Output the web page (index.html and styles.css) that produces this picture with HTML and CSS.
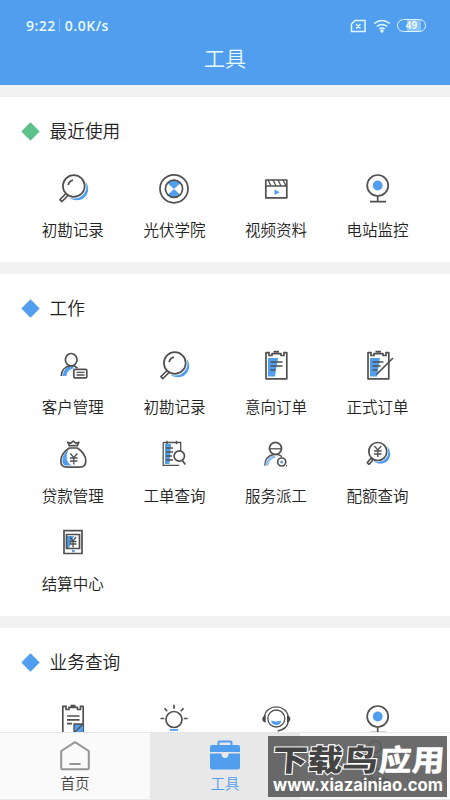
FILE: index.html
```html
<!DOCTYPE html>
<html lang="zh-CN">
<head>
<meta charset="utf-8">
<title>工具</title>
<link rel="stylesheet" href="styles.css">
</head>
<body>
<svg class="defs" aria-hidden="true">
  <symbol id="lens" viewBox="0 0 40 40">
    <circle class="blue" cx="23.9" cy="20.9" r="11.3"/>
    <circle class="halo" cx="21.200" cy="18.300" r="12.200"/>
    <path class="ln" d="M13 25.5l-6 6M15 27.5l-6 6M6.4 31.2l3 3M13 25.5l2 2"/>
    <circle class="ln w" cx="20.8" cy="18" r="10.9"/>
    <path class="ln" d="M15.2 17.2c.5-2.700 2.300-4.500 4.800-5"/>
  </symbol>
  <symbol id="ring" viewBox="0 0 40 40">
    <path class="blue" d="M20 21l-6.500-6q6.500-7 13 0zM20 21l-6.500 6q6.500 6 13 0z"/>
    <circle class="ln" cx="20" cy="20.800" r="14"/>
    <circle class="ln" cx="20" cy="20.800" r="8.600"/>
  </symbol>
  <symbol id="clap" viewBox="0 0 40 40">
    <path class="ln" d="M9.800 12h21v17.800h-21zM9.800 18h21"/><path class="thin" d="M12 12l3 6M17 12l3 6M22 12l3 6M27 12l3 6"/>
    <path class="blue" d="M18.500 21.500l5.200 2.700-5.200 2.900z"/>
  </symbol>
  <symbol id="cam" viewBox="0 0 40 40">
    <circle class="ln" cx="19.700" cy="17.500" r="10.500"/><circle class="blue" cx="19.700" cy="17.500" r="4.900"/>
    <path class="ln" d="M19.700 28v5.500M12 33.700h16"/>
  </symbol>
  <symbol id="client" viewBox="0 0 40 40">
    <path class="band" d="M11.500 31c.3-4.500 3.500-8 8.500-9.200"/>
    <path class="ln" d="M8.300 31c0-5.500 3.500-9.600 9.700-10.300 2.800-.1 5 1 6.500 2.500"/>
    <ellipse class="ln w" cx="18.200" cy="14.700" rx="5.800" ry="6.200"/>
    <rect class="ln w" x="20.800" y="24.300" width="13" height="8.600" rx="1.200"/>
    <path class="thin" d="M23.500 27.300h8M23.500 30h8"/>
  </symbol>
  <symbol id="board" viewBox="0 0 40 40">
    <path class="blue" d="M12 13h10l-3 18.500h-7z"/>
    <path class="ln" d="M13 7.600h-3v26.200h20.800V7.600h-3M13 6.700v3.800h3V8.600h9v1.900h3V6.700M17.500 6.700h5.500"/>
    <path class="thin thick" d="M14.500 17h12M14.500 21h12M14.500 25h4.800"/>
  </symbol>
  <symbol id="signed" viewBox="0 0 40 40">
    <path class="blue" d="M12 13h10l-3 18.500h-7z"/>
    <path class="ln" d="M13 7.600h-3v26.200h20.800V7.600h-3M13 6.700v3.800h3V8.600h9v1.900h3V6.700M17.500 6.700h5.500"/>
    <path class="thin thick" d="M14.500 17h11M14.500 21h8M14.500 25h4.800"/>
    <path class="ln" d="M35 13L18.500 29.500"/>
  </symbol>
  <symbol id="bag" viewBox="0 0 40 40">
    <path class="blue" d="M15.500 15.500c-5.500 4.500-8.500 12-4 16h7c-5.500-3.500-6-9.500-3-16z"/>
    <path class="ln" d="M16.300 14C11.500 17 7.800 21.500 7.800 27c0 4 2.500 6.200 6 6.200h13c3.500 0 6-2.200 6-6.200 0-5.500-3.700-10-8.500-13zM16.300 11.700l-1.500-3.500 3 1 2.500-2 2.500 2 3-1-1.500 3.500z"/>
    <path class="thin" d="M17.300 19.500l3.500 4 3.500-4M17 24h7.500M17 27h7.500M20.800 23.500v7"/>
  </symbol>
  <symbol id="sheet" viewBox="0 0 40 40">
    <path class="blue" d="M11 10h6l-1.500 20H11z"/>
    <path class="thin" d="M9.200 8.500v22.800h16M9.200 8.500h17.500v8.500M13 6.800v3.500M22.500 6.800v3.500M17 8.500h2M12 14h7M12 18h7M12 22h6M12 26h7"/>
    <circle class="ln w" cx="25.300" cy="22" r="5.200"/><path class="ln" d="M28.300 26.500l3 4"/>
  </symbol>
  <symbol id="worker" viewBox="0 0 40 40">
    <path class="band pale" d="M11 31.500c.5-5 3.500-8 8-9"/>
    <path class="thin" d="M8.700 31.800c.3-6.500 3.500-10.300 9-11.300h4c2 .4 3 1 4.300 2.300"/>
    <circle class="ln w" cx="19.500" cy="14.300" r="6"/><path class="thin" d="M12.800 14.800h13.400"/>
    <circle class="ln w" cx="25.700" cy="28" r="4"/><circle class="blue" cx="25.700" cy="28" r="1.500"/>
    <path class="thin" d="M30 31.700h1.200"/>
  </symbol>
  <symbol id="quota" viewBox="0 0 40 40">
    <circle class="blue" cx="22.500" cy="20" r="9.800"/><circle class="halo" cx="20.100" cy="17.800" r="10.200"/>
    <path class="ln" d="M13 24.200l-4 4.800M15 26l-4 4.500M9 28.500l2 2M13 24.200l2 1.800"/>
    <circle class="ln w" cx="19.800" cy="17.500" r="9"/>
    <path class="thin" d="M16.300 12l3.500 4 3.500-4M16 17h7.600M16 20h7.600M19.800 16v7"/>
  </symbol>
  <symbol id="settle" viewBox="0 0 40 40">
    <path class="blue" d="M14 14h7l-5 12h-2z"/>
    <path class="thin thick" d="M11 8.700h18v22.800H11zM13.500 12.500h13v14h-13z"/>
    <path class="thin" d="M17 15l3 4 3-4M16.500 19.500h7M16.500 22h7M20 19v6.500"/>
    <path class="blue" d="M19 28h2.500v2.300H19z"/>
  </symbol>
  <symbol id="note" viewBox="0 0 40 40">
    <path class="ln" d="M13 7.400H9.800v27h20.400v-27H27M13 6.500v4h3V8.400h8.500v2.100h3v-4M17.500 6.600h5M14 17h12.500M14 20.800h12.500M14 24.700h5"/>
    <path class="blue" d="M21 25h9v9h-9z"/><path class="thin" d="M21 34v-9h9M30 25l-9 9"/>
  </symbol>
  <symbol id="bulb" viewBox="0 0 40 40">
    <circle class="ln" cx="20" cy="20.500" r="8"/>
    <path class="ln" d="M20 5.800v4M10.500 9.300l2.700 3M29.500 9.300l-2.700 3M6.500 19.500h3.800M29.700 19.500h4"/>
    <path class="blue" d="M16 30h8v1.800h-8z"/>
  </symbol>
  <symbol id="support" viewBox="0 0 40 40">
    <circle class="thin" cx="20.300" cy="19.500" r="8.500"/>
    <path class="thin" d="M8.500 18C9.500 4.500 31 4.500 32.200 18M32.200 23c-1 5-5 8-10.500 9"/>
    <path class="ink" d="M9.700 16.500v7c-4.500-.2-4.500-6.800 0-7zM31 16.500v7c4.500-.2 4.500-6.800 0-7z"/>
    <path class="blue" d="M15 21.500q5.300 2 10.500 0-1 4.500-5.200 4.500t-5.300-4.500z"/>
  </symbol>
</svg>

<header class="top">
  <div class="status">
    <div class="clock"><span>9:22</span><i></i><span>0.0K/s</span></div>
    <div class="signals">
      <svg width="17" height="14" viewBox="0 0 17 14"><path d="M5 1.500h10v11H1.500V5zM6 5l4.500 4.500M10.500 5L6 9.500"/></svg>
      <svg width="18" height="14" viewBox="0 0 18 14"><path d="M1.200 4.500q7.800-6 15.600 0M3.800 7.300q5.200-3.800 10.400 0M6.300 9.900q2.700-2 5.400 0"/><circle cx="9" cy="12" r=".9"/></svg>
      <span class="battery">49</span>
    </div>
  </div>
  <h1>工具</h1>
</header>

<main>
  <section class="recent">
    <h2><i class="diamond green"></i><span>最近使用</span></h2>
    <div class="grid">
      <div class="tool"><svg><use href="#lens"/></svg><span>初勘记录</span></div>
      <div class="tool"><svg><use href="#ring"/></svg><span>光伏学院</span></div>
      <div class="tool"><svg><use href="#clap"/></svg><span>视频资料</span></div>
      <div class="tool"><svg><use href="#cam"/></svg><span>电站监控</span></div>
    </div>
  </section>
  <section class="work">
    <h2><i class="diamond"></i><span>工作</span></h2>
    <div class="grid">
      <div class="tool"><svg><use href="#client"/></svg><span>客户管理</span></div>
      <div class="tool"><svg><use href="#lens"/></svg><span>初勘记录</span></div>
      <div class="tool"><svg><use href="#board"/></svg><span>意向订单</span></div>
      <div class="tool"><svg><use href="#signed"/></svg><span>正式订单</span></div>
      <div class="tool"><svg><use href="#bag"/></svg><span>贷款管理</span></div>
      <div class="tool"><svg><use href="#sheet"/></svg><span>工单查询</span></div>
      <div class="tool"><svg><use href="#worker"/></svg><span>服务派工</span></div>
      <div class="tool"><svg><use href="#quota"/></svg><span>配额查询</span></div>
      <div class="tool"><svg><use href="#settle"/></svg><span>结算中心</span></div>
    </div>
  </section>
  <section class="query">
    <h2><i class="diamond"></i><span>业务查询</span></h2>
    <div class="grid">
      <div class="tool"><svg><use href="#note"/></svg></div>
      <div class="tool"><svg><use href="#bulb"/></svg></div>
      <div class="tool"><svg><use href="#support"/></svg></div>
      <div class="tool"><svg><use href="#cam"/></svg></div>
    </div>
  </section>
</main>

<nav class="tabs">
  <div class="tab"><svg width="34" height="34" viewBox="0 0 34 34"><path class="gray" d="M3.200 12L17 3.200 30.800 12v17q0 1.300-1.300 1.300h-25q-1.300 0-1.300-1.300zM11.500 25h11"/></svg><span>首页</span></div>
  <div class="tab active"><svg width="34" height="34" viewBox="0 0 34 34"><path class="handle" d="M10.500 7V3.500q0-1 1-1h11q1 0 1 1V7"/><path class="blue" d="M4 6h26q2 0 2 2v5H2V8q0-2 2-2zM2 14.500h11.500q0 4.500 3.500 4.500t3.500-4.500H32V28.500q0 2-2 2H4q-2 0-2-2z"/></svg><span>工具</span></div>
  <div class="tab"><svg width="34" height="34" viewBox="0 0 34 34"><g class="gray"><circle cx="17" cy="8" r="6"/><path d="M4 30q1-12 13-12t13 12z"/></g></svg><span>我的</span></div>
</nav>
<svg class="mark" width="179" height="61" viewBox="0 0 179 61">
  <rect width="179" height="61"/>
  <g transform="translate(4 35) skewX(-4)">
    <text class="dark" textLength="105" lengthAdjust="spacingAndGlyphs">下载鸟</text>
    <text class="light" x="106" textLength="66" lengthAdjust="spacingAndGlyphs">应用</text>
  </g>
  <text class="url" x="5" y="55" textLength="170" lengthAdjust="spacingAndGlyphs">www.xiazainiao.com</text>
</svg>
</body>
</html>
```

FILE: styles.css
```css
* { box-sizing: border-box; }
body {
  margin: 0;
  height: 800px;
  overflow: hidden;
  position: relative;
  background: #f2f2f3;
  color: #222;
  font-family: "Noto Sans CJK SC", sans-serif;
  font-weight: 350;
}
.defs { display: none; }
.top { height: 85px; background: #519eef; color: #e9fbff; }
.status {
  height: 43px;
  padding: 8px 24px 0 26px;
  display: flex;
  justify-content: space-between;
  align-items: center;
}
.clock { display: flex; align-items: center; font: 600 14px/16px "Open Sans", sans-serif; letter-spacing: .5px; }
.clock i { width: 1px; height: 13px; margin: 0 5px 0 3px; background: #7dbdf5; }
.signals { display: flex; align-items: center; gap: 6px; }
.signals svg { fill: none; stroke: #e0f8ff; stroke-width: 1.5; }
.battery {
  width: 29px;
  height: 13px;
  border: 1.5px solid #e0f8ff;
  border-radius: 7px;
  background: linear-gradient(90deg, #519eef 35%, #8bc1f5 35% 85%, #519eef 85%);
  font: bold 10px/10px "Open Sans", sans-serif;
  text-align: center;
}
h1 { margin: 0; font-size: 21px; line-height: 29px; font-weight: 350; text-align: center; }
section { background: #fff; padding: 0 22px; margin-top: 12px; }
.recent { height: 165px; }
.work { height: 342px; }
.query { height: 172px; }
h2 {
  margin: 0;
  height: 71px;
  padding-bottom: 3px;
  display: flex;
  align-items: center;
  gap: 12.500px;
  font-size: 17.700px;
  font-weight: 350;
}
h2 span { padding-bottom: 2px; }
.diamond { width: 13px; height: 13px; margin-left: 2px; background: #519eef; transform: rotate(45deg); }
.green { background: #5dc18c; }
.grid { display: grid; grid-template-columns: repeat(4, 101.600px); grid-auto-rows: 88.500px; }
.tool { display: flex; flex-direction: column; align-items: center; gap: 9px; }
.tool svg { width: 40px; height: 40px; }
.tool span { font-size: 15.500px; line-height: 24px; }
.blue { fill: #519eef; }
.ink { fill: #484848; }
.halo { fill: #fff; }
.ln { fill: none; stroke: #505050; stroke-width: 1.700; stroke-linejoin: round; }
.w { fill: #fff; }
.thin { fill: none; stroke: #505050; stroke-width: 1.300; }
.thick { stroke-width: 1.700; }
.band { fill: none; stroke: #519eef; stroke-width: 3.600; }
.pale { stroke: #85bdf4; stroke-width: 2.400; }
.tabs {
  position: absolute;
  left: 0;
  top: 732px;
  width: 450px;
  height: 68px;
  display: flex;
  background: #fafafa;
  border-top: 1px solid #e6e6e6;
  border-bottom: 1px solid #e9e9e9;
}
.tab { flex: 1; display: flex; flex-direction: column; align-items: center; padding-top: 6px; }
.tab span { margin-top: -1px; font-size: 14.500px; line-height: 22px; color: #444; }
.tab.active { background: #e8e8e8; }
.tab.active span { color: #519eef; }
.gray { fill: none; stroke: #949494; stroke-width: 2; stroke-linejoin: round; }
.handle { fill: none; stroke: #519eef; stroke-width: 2; }
.mark { position: absolute; left: 268px; top: 736px; }
.mark rect { fill: #555; fill-opacity: .87; }
.mark text { font-family: "Noto Sans CJK SC", sans-serif; font-weight: 900; font-size: 30px; }
.mark .dark { fill: #444; stroke: #fff; stroke-width: 2; paint-order: stroke; }
.mark .light { fill: #fff; }
.mark .url { font: bold 17px Inter, sans-serif; fill: #fff; }
```
